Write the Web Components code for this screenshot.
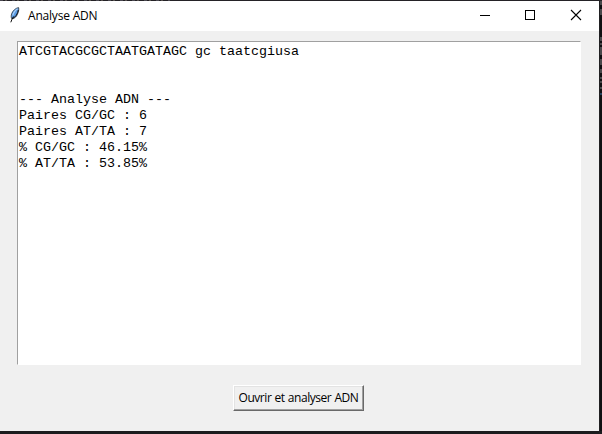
<!DOCTYPE html>
<html lang="fr">
<head>
<meta charset="utf-8">
<title>Analyse ADN</title>
<style>
html, body { margin: 0; height: 100%; overflow: hidden; background: #1c1c1e; }
</style>
</head>
<body>
<desktop-backdrop>
  <app-window>
    <title-bar slot="title">Analyse ADN</title-bar>
    <text-area>ATCGTACGCGCTAATGATAGC gc taatcgiusa


--- Analyse ADN ---
Paires CG/GC : 6
Paires AT/TA : 7
% CG/GC : 46.15%
% AT/TA : 53.85%</text-area>
    <raised-button>Ouvrir et analyser ADN</raised-button>
  </app-window>
</desktop-backdrop>
<script>
function define(name, html) {
  customElements.define(name, class extends HTMLElement {
    constructor() {
      super();
      this.attachShadow({ mode: 'open' }).innerHTML = html.trim();
    }
  });
}

define('desktop-backdrop', `
<style>
:host { display: grid; grid-template: 1px 430px 3px / 599px 3px; width: 602px; height: 434px; background: #1c1c1e; }
.top { grid-area: 1 / 1 / 2 / 3; background:
  repeating-linear-gradient(90deg, #4a4850 0 3px, #242226 3px 5px, #55504e 5px 7px, #242226 7px 12px) 0 0 / 170px 1px no-repeat, #242226; }
.side { grid-area: 2 / 2 / 4 / 3; display: block; }
::slotted(*) { grid-area: 2 / 1 / 3 / 2; }
</style>
<div class="top"></div>
<slot></slot>
<svg class="side" width="3" height="433" shape-rendering="crispEdges">
  <path fill="#202022" d="M0 0h1v433H0z"/><path fill="#101012" d="M1 0h2v430H1z"/>
  <path fill="#48484a" d="M1 0h2v4H1zM1 8h2v6H1zM1 36h2v4H1zM1 42h2v2H1zM1 46h2v8H1zM1 58h2v6H1zM1 68h2v4H1zM1 76h2v2H1zM1 80h2v2H1zM1 86h2v2H1z"/>
  <path fill="#24405c" d="M1 92h2v2H1z"/>
</svg>`);

define('app-window', `
<style>
:host { display: flex; flex-direction: column; background: #f0f0f0; overflow: hidden; }
main { flex: 1; display: flex; flex-direction: column; align-items: center; gap: 20px; padding: 10px 18px 0 17px; }
</style>
<slot name="title"></slot>
<main><slot></slot></main>`);

define('title-bar', `
<style>
:host { display: flex; height: 30px; background: #fff; color: #000; font: 12px/30px "Open Sans", "Noto Sans", sans-serif; }
.icon { width: 11px; height: 16px; margin: 6px 8px 0 9px; }
.title { flex: 1; white-space: nowrap; letter-spacing: -0.2px; }
.controls { display: flex; margin-right: -1px; }
.controls svg { width: 46px; height: 30px; display: block; }
</style>
<svg class="icon" viewBox="0 0 11 16">
  <path d="M9.600.6C7 .8 3.500 4 2.700 6.600 2 8.800 2 10.600 2.800 11.800c2.500 0 4.600-2 5.600-4.400C9.400 5 10.200 2.500 9.600.6z" fill="#5a9ae2" stroke="#222" stroke-width=".7"/>
  <path d="M8.600 1.800C6.300 3 4.600 5.700 3.800 8.400" stroke="#a8d0f8" stroke-width="1.200" fill="none"/>
  <path d="M9.300 3C8.900 6.500 6.500 10.500 3 11.700" stroke="#111" stroke-width="1" fill="none"/>
  <path d="M4.500 9.500C3.200 11.500 2.600 13 1.800 15.300" stroke="#111" stroke-width="1" fill="none"/>
</svg>
<span class="title"><slot></slot></span>
<div class="controls">
  <svg viewBox="0 0 46 30"><path shape-rendering="crispEdges" d="M18 14h10v1H18z"/></svg>
  <svg viewBox="0 0 46 30"><path d="M17.500 9.500h9v9h-9z" fill="none" stroke="#000" shape-rendering="crispEdges"/></svg>
  <svg viewBox="0 0 46 30"><path d="M17 9l10 10M27 9L17 19" fill="none" stroke="#000" stroke-width="1.100"/></svg>
</div>`);

define('text-area', `
<style>
:host { display: block; box-sizing: border-box; width: 564px; height: 324px; background: #fff;
  border: solid; border-width: 1px; border-color: #a0a0a0 #fff #fff #a0a0a0; padding: 2px 1px 1px;
  color: #000; font: 13.333px/16px "Liberation Mono", "Courier New", monospace; white-space: pre; }
</style><slot></slot>`);

define('raised-button', `
<style>
:host { display: flex; align-items: center; justify-content: center; box-sizing: border-box; width: 131px; height: 26px;
  margin-right: 1px;
  background: #f0f0f0; border: 1px solid; border-color: #fff #696969 #696969 #fff;
  box-shadow: inset -1px -1px #a0a0a0, inset 1px 1px #e3e3e3;
  color: #000; font: 12px/16px "Open Sans", "Noto Sans", sans-serif; letter-spacing: -0.45px; word-spacing: 0.5px; white-space: nowrap; }
</style><slot></slot>`);
</script>
</body>
</html>
